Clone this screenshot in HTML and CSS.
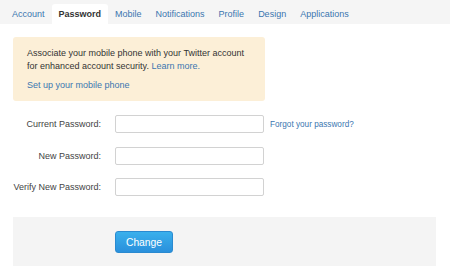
FILE: index.html
```html
<!DOCTYPE html>
<html>
<head>
<meta charset="utf-8">
<link rel="stylesheet" href="styles.css">
</head>
<body>
<nav class="tabs">
  <a class="tab">Account</a>
  <a class="tab active">Password</a>
  <a class="tab">Mobile</a>
  <a class="tab">Notifications</a>
  <a class="tab">Profile</a>
  <a class="tab">Design</a>
  <a class="tab">Applications</a>
</nav>
<main class="content">
  <div class="notice">
    <p class="notice-text"><span>Associate your mobile phone with your Twitter account</span><br><span>for enhanced account security.</span> <a class="link">Learn more.</a></p>
    <p class="notice-action"><a class="link">Set up your mobile phone</a></p>
  </div>
  <form class="form">
    <div class="row">
      <label class="label">Current Password:</label>
      <input class="input" type="password">
      <a class="link forgot">Forgot your password?</a>
    </div>
    <div class="row">
      <label class="label">New Password:</label>
      <input class="input" type="password">
    </div>
    <div class="row">
      <label class="label">Verify New Password:</label>
      <input class="input" type="password">
    </div>
  </form>
  <div class="actions">
    <button class="btn" type="button">Change</button>
  </div>
</main>
</body>
</html>
```
FILE: styles.css
```css
* { box-sizing: border-box; }
html, body { margin: 0; padding: 0; background: #fff; }
body {
  font-family: "Liberation Sans", Arial, sans-serif;
  font-size: 9px;
  color: #333;
  width: 450px;
  height: 273px;
  overflow: hidden;
}
.tabs {
  display: flex;
  align-items: flex-end;
  height: 24px;
  padding-left: 5px;
  background: #f5f5f5;
}
.tab {
  display: block;
  height: 20px;
  line-height: 21px;
  padding: 0 7px;
  color: #3b76b0;
  font-size: 9px;
  border-radius: 3px 3px 0 0;
}
.tab.active {
  background: #fff;
  color: #333;
  font-weight: bold;
}
.content {
  padding: 13px 14px 0 13px;
}
.link { color: #3b76b0; }
.notice {
  width: 252px;
  background: #fcefd7;
  border-radius: 3px;
  padding: 10px 10px 9px 14px;
}
.notice p { margin: 0; }
.notice-text { line-height: 13px; white-space: nowrap; }
.notice-action { margin-top: 6px !important; line-height: 13px; }
.form {
  margin: 14px 0 0;
  display: flex;
  flex-direction: column;
  gap: 13.5px;
}
.row {
  display: flex;
  align-items: center;
  height: 18px;
}
.label {
  width: 88px;
  text-align: right;
  color: #444;
  margin-right: 14px;
  white-space: nowrap;
}
.input {
  width: 149px;
  height: 18px;
  border: 1px solid #d2d2d2;
  border-radius: 2px;
  background: #fff;
  margin: 0;
  padding: 0;
}
.forgot { margin-left: 6px; font-size: 8.2px; }
.actions {
  margin-top: 21px;
  background: #f4f4f4;
  height: 49px;
  padding: 14px 0 0 102px;
}
.btn {
  width: 58px;
  height: 22px;
  border: 1px solid #2a8ad0;
  border-radius: 3px;
  background: linear-gradient(#3ab0ec, #2a90dc);
  color: #fff;
  font-family: "Liberation Sans", Arial, sans-serif;
  font-size: 10.3px;
  padding: 0;
}
```
